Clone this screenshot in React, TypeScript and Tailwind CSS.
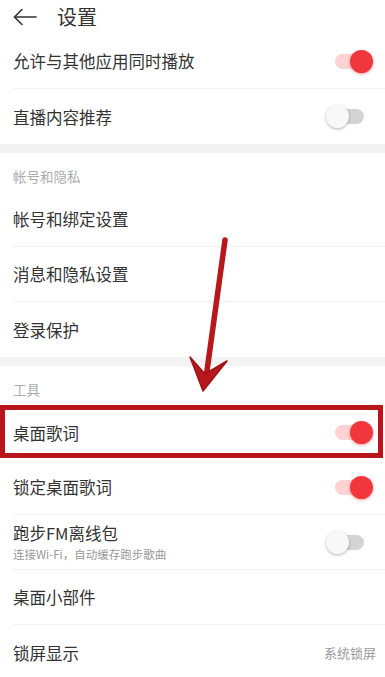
import React from 'react';

const FONT = { fontFamily: '"Noto Sans CJK SC", "Noto Sans", sans-serif' };

// Schalter (an/aus)
const Toggle = ({ on }: { on: boolean }) =>
  on ? (
    <div className="relative w-[38px] h-[24px] flex items-center">
      <div className="absolute left-0 w-[32px] h-[15px] rounded-full bg-[#fcd2d2]" />
      <div className="absolute right-0 w-[23px] h-[23px] rounded-full bg-[#f2373c] shadow-[0_1px_3px_rgba(220,40,40,0.45)]" />
    </div>
  ) : (
    <div className="relative w-[38px] h-[24px] mr-[9px] flex items-center">
      <div className="absolute right-0 w-[26px] h-[15px] rounded-full bg-[#d4d4d4]" />
      <div className="absolute left-0 w-[23px] h-[23px] rounded-full bg-[#f8f8f8] shadow-[0_1px_3px_rgba(0,0,0,0.3)]" />
    </div>
  );

type RowProps = {
  title: string;
  sub?: string;
  toggle?: boolean;
  value?: string;
  divider?: boolean;
  highlight?: boolean;
};

const Row = ({ title, sub, toggle, value, divider = true, highlight }: RowProps) => (
  <div className="relative h-[55px] pl-[13px]">
    <div className={`h-full flex items-center pr-[12px] ${divider ? 'border-b border-[#f1f1f1]' : ''}`}>
      <div className="flex-1 flex flex-col">
        <span className="text-[16.5px] leading-[22px] text-[#333]">{title}</span>
        {sub && <span className="text-[11.5px] leading-[16px] text-[#999] mt-[2px]">{sub}</span>}
      </div>
      {toggle !== undefined && <Toggle on={toggle} />}
      {value && <span className="text-[13px] text-[#9a9a9a] mr-[-3px]">{value}</span>}
    </div>
    {highlight && (
      <div className="absolute left-0 right-[2px] top-0 bottom-[2px] border-[5px] border-[#b9161b] pointer-events-none" />
    )}
  </div>
);

const SectionTitle = ({ text }: { text: string }) => (
  <div className="h-[39px] pl-[13px] pt-[14px] text-[13.5px] leading-[18px] text-[#ababab]">{text}</div>
);

const Gap = () => <div className="h-[9px] bg-[#f3f3f3]" />;

export default function App() {
  return (
    <div className="relative w-[385px] h-[677px] overflow-hidden bg-white" style={FONT}>
      {/* Kopfzeile */}
      <header className="h-[34px] flex items-center pl-[13px]">
        <svg width="24" height="18" viewBox="0 0 24 18" fill="none" stroke="#333" strokeWidth="1.6" strokeLinecap="round">
          <path d="M23 9H2" />
          <path d="M9 1.5L1.5 9L9 16.5" />
        </svg>
        <h1 className="ml-[20px] text-[20px] leading-[26px] text-[#333]">设置</h1>
      </header>

      <Row title="允许与其他应用同时播放" toggle />
      <Row title="直播内容推荐" toggle={false} divider={false} />
      <Gap />

      <SectionTitle text="帐号和隐私" />
      <Row title="帐号和绑定设置" />
      <Row title="消息和隐私设置" />
      <Row title="登录保护" divider={false} />
      <Gap />

      <SectionTitle text="工具" />
      <Row title="桌面歌词" toggle highlight divider={false} />
      <Row title="锁定桌面歌词" toggle />
      <Row title="跑步FM离线包" sub="连接Wi-Fi，自动缓存跑步歌曲" toggle={false} />
      <Row title="桌面小部件" />
      <Row title="锁屏显示" value="系统锁屏" divider={false} />

      {/* Markierungspfeil */}
      <svg className="absolute left-0 top-0 pointer-events-none" width="385" height="677" viewBox="0 0 385 677">
        <path d="M225 240 L206 378" stroke="#b8171b" strokeWidth="5.5" strokeLinecap="round" fill="none" />
        <path d="M203 391 L190 357 L205 374 L227 361 Z" fill="#b8171b" stroke="#9e1216" strokeWidth="1.5" strokeLinejoin="round" />
      </svg>
    </div>
  );
}
